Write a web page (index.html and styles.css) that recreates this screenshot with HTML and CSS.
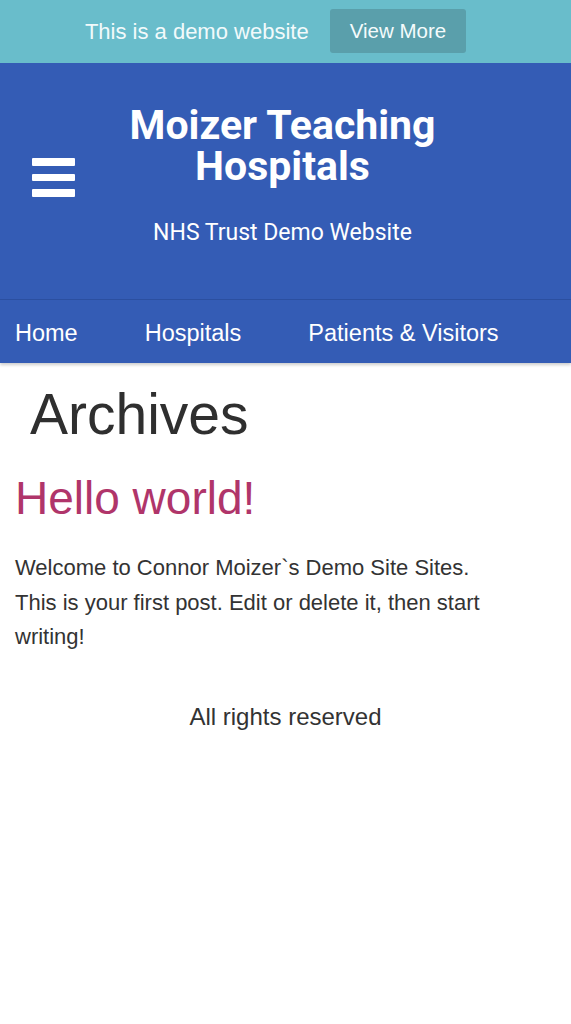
FILE: index.html
```html
<!DOCTYPE html>
<html lang="en">
<head>
  <meta charset="UTF-8" />
  <title>Moizer Teaching Hospitals</title>
  <link rel="stylesheet" href="styles.css">
</head>
<body>

  <!-- demo notice -->
  <div class="demo-bar">
    <span>This is a demo website</span>
    <a href="#" class="demo-btn">View More</a>
  </div>

  <!-- site header -->
  <header class="site-header">
    <button class="menu-toggle" aria-label="Menu">
      <span></span><span></span><span></span>
    </button>
    <div class="branding">
      <h1 class="site-title">Moizer Teaching Hospitals</h1>
      <p class="site-desc">NHS Trust Demo Website</p>
    </div>
  </header>

  <nav class="main-nav">
    <a href="#">Home</a>
    <a href="#">Hospitals</a>
    <a href="#">Patients &amp; Visitors</a>
  </nav>

  <main class="content">
    <h1 class="page-title">Archives</h1>
    <article class="post">
      <h2 class="post-title">Hello world!</h2>
      <p>Welcome to Connor Moizer`s Demo Site Sites. This is your first post. Edit or delete it, then start writing!</p>
    </article>
  </main>

  <footer class="site-footer">All rights reserved</footer>

</body>
</html>
```

FILE: styles.css
```css
body {
  margin: 0;
  padding: 0;
  background: #fff;
  color: #333;
  font-family: "Liberation Sans", Arial, sans-serif;
}
a {
  text-decoration: none;
}

/* demo notice */
.demo-bar {
  background: #69bdcb;
  height: 63px;
  display: flex;
  align-items: center;
  justify-content: center;
  gap: 21px;
  padding-right: 20px;
  color: #f2fafb;
  font-size: 22px;
}
.demo-btn {
  background: #5a9fab;
  color: #f4fbfc;
  border-radius: 3px;
  font-size: 20.5px;
  padding: 0 20px;
  height: 44px;
  line-height: 44px;
  margin-top: -1px;
}

/* header */
.site-header {
  background: #345cb5;
  display: grid;
  grid-template-columns: 1fr auto 1fr;
  align-items: start;
  padding: 42px 0 52px;
  border-bottom: 1px solid #2c50a2;
}
.menu-toggle {
  background: none;
  border: 0;
  padding: 0;
  margin: 53px 0 0 32px;
  width: 43px;
  display: flex;
  flex-direction: column;
  gap: 8px;
  cursor: pointer;
}
.menu-toggle span {
  display: block;
  height: 7.5px;
  background: #fff;
  border-radius: 1px;
}
.branding {
  text-align: center;
  color: #fff;
  font-family: Roboto, "Liberation Sans", sans-serif;
  width: 330px;
  margin-left: -6px;
}
.site-title {
  margin: 0;
  font-size: 41px;
  line-height: 41px;
  font-weight: 700;
}
.site-desc {
  margin: 32px 0 0;
  font-size: 23px;
  line-height: 28px;
}

/* navigation */
.main-nav {
  background: #345cb5;
  height: 63px;
  display: flex;
  align-items: center;
  gap: 67px;
  padding: 3px 0 0 15px;
  box-sizing: border-box;
  box-shadow: 0 2px 3px rgba(0, 0, 0, 0.2);
  position: relative;
}
.main-nav a {
  color: #fff;
  font-size: 23.5px;
}

/* content */
.content {
  padding: 0 15px;
}
.page-title {
  margin: 19px 0 0 15px;
  font-size: 57px;
  font-weight: 400;
  line-height: 64px;
  color: #2f2f2f;
}
.post-title {
  margin: 26px 0 0;
  font-size: 46px;
  font-weight: 400;
  line-height: 52px;
  color: #b0356a;
}
.post p {
  margin: 27px 0 0;
  max-width: 480px;
  font-size: 22px;
  line-height: 34.5px;
}

/* footer */
.site-footer {
  text-align: center;
  font-size: 24px;
  margin-top: 47px;
  line-height: 30px;
}
```
